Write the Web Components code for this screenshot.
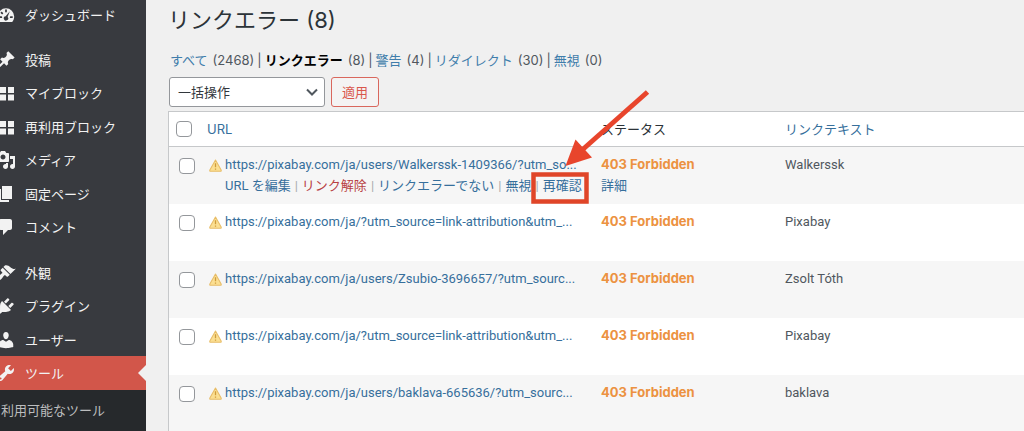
<!DOCTYPE html>
<html lang="ja">
<head>
<meta charset="utf-8">
<title>リンクエラー</title>
<style>
html,body{height:100%}
body{margin:0;background:#f0f0f0;overflow:hidden;font:13px/20px Inter,"Noto Sans CJK JP",sans-serif;color:#50575e}
</style>
</head>
<body>
<admin-page></admin-page>
<script>
const define = (name, html, setup) => {
  const tpl = document.createElement('template');
  tpl.innerHTML = html;
  customElements.define(name, class extends HTMLElement {
    constructor() {
      super();
      this.attachShadow({mode: 'open'}).append(tpl.content.cloneNode(true));
    }
    connectedCallback() { if (setup) setup(this, this.shadowRoot); }
  });
};

const ICONS = {
  dashboard: 'M3.8 17h12.4c1.3-1.5 2-3.500 2-5.500A8.200 8.200 0 0 0 1.800 11.500C1.800 13.500 2.500 15.500 3.800 17zM9.100 5.200a.9.9 0 1 1 1.800 0v1.300a.9.9 0 1 1-1.800 0zM4.700 7.100a1 1 0 0 1 1.400-.2l.8.8a.9.9 0 0 1-1.300 1.300l-.8-.8zM3.300 11.300h2a.9.9 0 0 1 0 1.800h-2zM14.700 11.300h2v1.800h-2a.9.9 0 0 1 0-1.800zM13.800 6.300l-2.200 5.600a2.200 2.200 0 1 1-1.900-.7z',
  pin: 'M10.440 3.020l1.820-1.820 6.360 6.350-1.830 1.820c-1.050-.68-2.480-.57-3.410.36l-.75.75c-.92.93-1.040 2.350-.35 3.410l-1.830 1.820-2.410-2.410-2.800 2.790c-.42.42-3.380 2.710-3.800 2.290s1.860-3.390 2.280-3.810l2.790-2.790L4.100 9.360l1.830-1.820c1.050.69 2.480.57 3.400-.36l.75-.75c.93-.92 1.050-2.350.36-3.410z',
  grid: 'M3 4h7v6H3zM12 4h6v6h-6zM3 11.500h7v6H3zM12 11.500h6v6h-6z',
  media: 'M13 11V4c0-.55-.45-1-1-1h-1.670L9 1H5L3.670 3H2c-.55 0-1 .45-1 1v7c0 .55.45 1 1 1h10c.55 0 1-.45 1-1zM7 4.500c1.380 0 2.500 1.120 2.500 2.500S8.380 9.500 7 9.500 4.500 8.380 4.500 7 5.620 4.500 7 4.500zM14 6h5v10.500c0 1.380-1.120 2.500-2.500 2.500S14 17.880 14 16.500s1.120-2.500 2.500-2.500c.17 0 .34.02.5.05V9h-3V6zm-4 8.050V13h2v3.500c0 1.380-1.120 2.500-2.500 2.500S7 17.880 7 16.500 8.120 14 9.500 14c.17 0 .34.02.5.05z',
  page: 'M6 15V2h10v13H6zm-1 1h8v2H3V5h2v11z',
  comment: 'M5 2h9c1.100 0 2 .9 2 2v7c0 1.100-.9 2-2 2h-2l-5 5v-5H5c-1.100 0-2-.9-2-2V4c0-1.100.9-2 2-2z',
  brush: 'M14.480 11.060L7.410 3.990l1.500-1.500c.5-.56 2.300-.47 3.510.32 1.210.8 1.430 1.280 2.910 2.100 1.180.64 2.450 1.260 4.450.85zm-.71.71L6.700 4.700 4.930 6.470c-.39.39-.39 1.020 0 1.410l1.060 1.060c.39.39.39 1.030 0 1.420-.6.6-1.430 1.110-2.210 1.690-.35.26-.7.53-1.010.84C1.430 14.230.4 16.080 1.400 17.070c.99 1 2.840-.03 4.180-1.360.31-.31.58-.66.85-1.020.57-.78 1.080-1.610 1.690-2.210.39-.39 1.020-.39 1.410 0l1.060 1.060c.39.39 1.020.39 1.410 0z',
  plug: 'M13.110 4.360L9.870 7.600 8 5.730l3.240-3.240c.35-.34 1.050-.2 1.560.32.52.51.66 1.210.31 1.550zm-8 1.770l.91-1.120 9.010 9.010-1.190.84c-.71.71-2.630 1.160-3.820 1.160H6.140L4.900 17.260c-.59.59-1.540.59-2.120 0-.59-.58-.59-1.530 0-2.120l1.240-1.240v-3.880c0-1.130.4-3.190 1.090-3.890zm7.260 3.970l3.240-3.240c.34-.35 1.040-.21 1.550.31.52.51.66 1.210.31 1.550l-3.240 3.250z',
  user: 'M10 9.250c-2.270 0-2.730-3.440-2.730-3.440C7 4.020 7.820 2 9.970 2c2.160 0 2.980 2.020 2.710 3.810 0 0-.41 3.440-2.680 3.440zm0 2.570L12.720 10c2.390 0 4.520 2.330 4.520 4.530v2.490s-3.650 1.130-7.240 1.130c-3.650 0-7.240-1.130-7.240-1.130v-2.490c0-2.250 1.940-4.480 4.470-4.480z',
  wrench: 'M16.680 9.770c-1.340 1.340-3.300 1.670-4.950.99l-5.410 6.520c-.99.99-2.590.99-3.580 0s-.99-2.590 0-3.570l6.520-5.420c-.68-1.650-.35-3.610.99-4.950 1.280-1.280 3.120-1.620 4.720-1.060l-2.890 2.890 2.820 2.820 2.860-2.870c.53 1.580.18 3.390-1.080 4.650zM3.810 16.210c.4.39 1.040.39 1.430 0 .4-.4.4-1.040 0-1.430-.39-.4-1.030-.4-1.430 0-.39.39-.39 1.030 0 1.430z'
};

define('menu-item', `<style>
:host{display:block;height:33px;position:relative}
:host(:nth-of-type(even)){height:34px}
:host([current]){background:#d2564a}
:host([current])::after{content:"";position:absolute;right:0;top:50%;margin-top:-8px;border:8px solid transparent;border-left:0;border-right-color:#f0f0f0}
a{display:flex;align-items:center;gap:9px;height:100%;color:#f2f2f2;text-decoration:none;white-space:nowrap}
.icon{display:flex;justify-content:flex-end;flex:none;width:16px;overflow:hidden}
svg{flex:none;width:20px;height:20px;fill:currentColor;fill-rule:evenodd}
</style><a href="#"><span class="icon"><svg viewBox="0 0 20 20" aria-hidden="true"><path/></svg></span><slot></slot></a>`,
(el, root) => root.querySelector('path').setAttribute('d', ICONS[el.getAttribute('icon')]));

define('admin-menu', `<style>
:host{display:block;background:#383a3f}
nav{display:flex;flex-direction:column;gap:12px}
.sub{background:#26292c;padding:10px 1px;min-height:60px}
.last{display:flex;flex-direction:column}
.sub a{color:#bcbdbe;text-decoration:none;white-space:nowrap}
.first{margin-top:-2px}
</style>
<nav aria-label="管理メニュー">
<div class="first"><menu-item icon="dashboard">ダッシュボード</menu-item></div>
<div><menu-item icon="pin">投稿</menu-item><menu-item icon="grid">マイブロック</menu-item><menu-item icon="grid">再利用ブロック</menu-item><menu-item icon="media">メディア</menu-item><menu-item icon="page">固定ページ</menu-item><menu-item icon="comment">コメント</menu-item></div>
<div class="last"><menu-item icon="brush">外観</menu-item><menu-item icon="plug">プラグイン</menu-item><menu-item icon="user">ユーザー</menu-item><menu-item icon="wrench" current>ツール</menu-item><div class="sub"><a href="#">利用可能なツール</a></div></div>
</nav>`);

define('status-filter', `<style>
ul{display:flex;margin:0;padding:0;list-style:none;white-space:nowrap}
li{display:flex;gap:5px}
li+li::before{content:"|";margin-right:-2px;margin-left:3px}
a{color:#3f7dab;text-decoration:none}
a[aria-current]{color:#000;font-weight:700}
</style>
<ul><li><a href="#">すべて</a><span>(2468)</span></li><li><a href="#" aria-current="page">リンクエラー</a><span>(8)</span></li><li><a href="#">警告</a><span>(4)</span></li><li><a href="#">リダイレクト</a><span>(30)</span></li><li><a href="#">無視</a><span>(0)</span></li></ul>`);

define('bulk-actions', `<style>
form{display:flex;gap:6px}
.pick{display:grid;width:156px}
select,button{font:inherit;height:30px;box-sizing:border-box;border-radius:3px;margin:0}
select{grid-area:1/1;appearance:none;border:1px solid #94979b;background:#fff;color:#32373c;padding:0 8px;width:100%}
svg{grid-area:1/1;justify-self:end;align-self:center;margin-right:6px;pointer-events:none;width:14px;height:14px;fill:none;stroke:#50575e;stroke-width:2}
button{border:1px solid #d9675d;background:#f4f3f3;color:#d9574c;padding:0 10px}
</style>
<form><div class="pick"><select aria-label="一括操作を選択"><option>一括操作</option></select><svg viewBox="0 0 14 14"><path d="M2 4.500l5 5 5-5"/></svg></div><button type="button">適用</button></form>`);

define('warning-icon', `<style>:host{display:block;flex:none;width:13px;height:13px}svg{display:block;width:100%;height:100%}</style>
<svg viewBox="0 0 12 12" role="img" aria-label="警告"><path d="M6 .9 11.200 10.200q.4 1-.6 1.100H1.400q-1-.1-.6-1.100z" fill="#fbdf92" stroke="#e8bd68" stroke-linejoin="round"/><path d="M6 4v3.600M6 8.700v1.200" stroke="#cf9c3c" stroke-width="1.200"/></svg>`);

define('callout-arrow', `<style>:host{display:block;width:120px;height:114px;pointer-events:none}svg{display:block}</style>
<svg width="120" height="114" viewBox="0 0 120 114" aria-hidden="true"><path d="M116.500 2 50 61" stroke="#e8452c" stroke-width="5"/><path d="M34.500 76 44.500 49.500 61 67.500z" fill="#e8452c"/><path d="M2.500 84.500h53v27h-53z" fill="none" stroke="#e04528" stroke-width="4.500"/></svg>`);

const ROWS = [
  ['https://pixabay.com/ja/users/Walkerssk-1409366/?utm_so...', 'Walkerssk'],
  ['https://pixabay.com/ja/?utm_source=link-attribution&amp;utm_...', 'Pixabay'],
  ['https://pixabay.com/ja/users/Zsubio-3696657/?utm_sourc...', 'Zsolt Tóth'],
  ['https://pixabay.com/ja/?utm_source=link-attribution&amp;utm_...', 'Pixabay'],
  ['https://pixabay.com/ja/users/baklava-665636/?utm_sourc...', 'baklava']
];
const ACTIONS = '<div class="actions"><a href="#">URL を編集</a><i>|</i><a href="#" class="del">リンク解除</a><i>|</i><a href="#">リンクエラーでない</a><i>|</i><a href="#">無視</a><i>|</i><a href="#">再確認</a></div>';

define('link-table', `<style>
:host{display:block;position:relative}
table{width:100%;table-layout:fixed;border-collapse:separate;border-spacing:0;background:#fff;border:1px solid #c6c8ca;border-right:0;box-sizing:border-box}
.c-check{width:38px}.c-url{width:386px}.c-status{width:184px}
th{height:34px;padding:0 8px;text-align:left;font-weight:400;border-bottom:1px solid #c6c8ca;color:#2c3338}
th:first-child{padding:0 7px}th:nth-child(2){padding:0}
td{height:49px;padding:8px 8px 0;vertical-align:top;white-space:nowrap;font-family:Roboto,"Noto Sans CJK JP",sans-serif}
td:first-child{padding:11px 10px 0;height:46px}
td:nth-child(2){padding-left:2px}
tbody tr:nth-child(odd){background:#f6f6f6}
input{appearance:none;display:block;width:16px;height:16px;margin:0;border:1px solid #94979b;border-radius:4px;background:#fff}
a{color:#366f9c;text-decoration:none}
.url{display:flex;align-items:center;gap:3px}
.actions{display:flex;gap:4px;padding-left:16px;margin-top:1px}
.actions i{font-style:normal;color:#a7aaad}
.actions .del{color:#b84043}
b{display:block;color:#ec9241;font-weight:700;font-family:Inter,sans-serif}
td:nth-child(3){padding-top:7px}
.more{display:block;margin-top:2px}
callout-arrow{position:absolute;left:363px;top:-21px}
</style>
<table><colgroup><col class="c-check"><col class="c-url"><col class="c-status"><col></colgroup>
<thead><tr><th><input type="checkbox" aria-label="すべて選択"></th><th><a href="#">URL</a></th><th>ステータス</th><th><a href="#">リンクテキスト</a></th></tr></thead>
<tbody>${ROWS.map(([url, text], n) => `<tr><td><input type="checkbox" aria-label="${text} を選択"></td><td><div class="url"><warning-icon></warning-icon><a href="#">${url}</a></div>${n ? '' : ACTIONS}</td><td><b>403 Forbidden</b>${n ? '' : '<a class="more" href="#">詳細</a>'}</td><td>${text}</td></tr>`).join('')}</tbody></table>
<callout-arrow></callout-arrow>`);

define('admin-page', `<style>
:host{display:grid;grid-template-columns:146px minmax(0,1fr);height:100%}
admin-menu{overflow:hidden}
main{display:flex;flex-direction:column;padding:4px 0 0 22px;overflow:hidden}
h1{margin:0 0 14px;font-size:22px;line-height:32px;font-weight:400;color:#2c3338}
status-filter{padding-left:2px;margin-bottom:7px}
bulk-actions{margin:0 0 4px 1px}
status-filter,bulk-actions{display:block}
</style>
<admin-menu></admin-menu><main><h1>リンクエラー (8)</h1><status-filter></status-filter><bulk-actions></bulk-actions><link-table></link-table></main>`);
</script>
</body>
</html>
